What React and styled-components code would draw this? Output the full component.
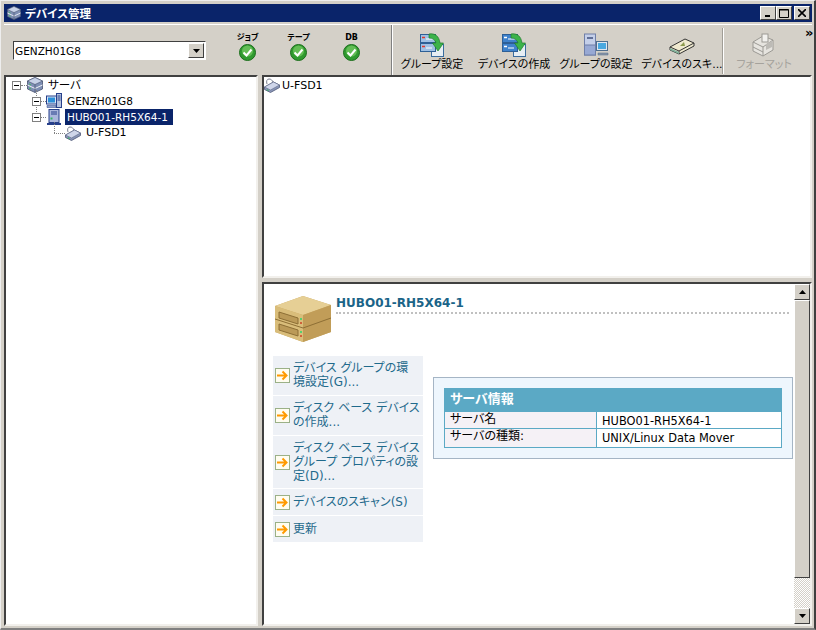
import React from 'react';
import styled, { createGlobalStyle } from 'styled-components';

const GlobalStyle = createGlobalStyle`
  html, body {
    margin: 0;
    padding: 0;
    background: #d4d0c8;
    overflow: hidden;
  }
`;

const FONT = `"DejaVu Sans", "Noto Sans CJK JP", sans-serif`;

const Window = styled.div`
  box-sizing: border-box;
  width: 816px;
  height: 630px;
  display: flex;
  flex-direction: column;
  background: #d4d0c8;
  font-family: ${FONT};
  font-feature-settings: 'palt';
  font-size: 11px;
  color: #000;
  border-right: 2px solid #404040;
  border-bottom: 2px solid #808080;
  border-top: 1px solid #eeeeee;
  border-left: 1px solid #eeeeee;
  padding: 3px 2px 2px 3px;
`;

const TitleBar = styled.div`
  height: 18px;
  flex: none;
  display: flex;
  align-items: center;
  padding: 0 2px 0 3px;
  background: #0a246a;
  color: #fff;
  font-weight: 700;
  font-size: 11.5px;
`;

const TitleText = styled.span`
  margin-left: 4px;
  flex: 1;
`;

const WinButton = styled.div`
  box-sizing: border-box;
  width: 16px;
  height: 14px;
  margin-left: ${(p) => p.$gap || 0}px;
  display: flex;
  align-items: center;
  justify-content: center;
  background: #d4d0c8;
  border-top: 1px solid #fff;
  border-left: 1px solid #fff;
  border-right: 1px solid #404040;
  border-bottom: 1px solid #404040;
`;

const Toolbar = styled.div`
  height: 51px;
  flex: none;
  margin-top: 2px;
  display: flex;
  border-top: 1px solid #fff;
  box-sizing: border-box;
`;

const LeftTools = styled.div`
  width: 388px;
  flex: none;
  box-sizing: border-box;
  display: flex;
  border-right: 1px solid #808080;
  box-shadow: 1px 0 0 #fff;
`;

const Combo = styled.div`
  box-sizing: border-box;
  width: 193px;
  height: 19px;
  margin: 16px 0 0 9px;
  display: flex;
  align-items: center;
  justify-content: space-between;
  background: #fff;
  padding: 0 1px 0 1px;
  font-size: 10.5px;
  border-top: 1px solid #404040;
  border-left: 1px solid #404040;
  border-right: 1px solid #fff;
  border-bottom: 1px solid #fff;
`;

const ComboArrow = styled.div`
  box-sizing: border-box;
  width: 16px;
  height: 15px;
  display: flex;
  align-items: center;
  justify-content: center;
  background: #d4d0c8;
  border-top: 1px solid #fff;
  border-left: 1px solid #fff;
  border-right: 1px solid #404040;
  border-bottom: 1px solid #404040;
`;

const StatusRow = styled.div`
  display: flex;
  margin-left: 16px;
  padding-top: 7px;
`;

const StatusItem = styled.div`
  width: ${(p) => p.$w}px;
  display: flex;
  flex-direction: column;
  align-items: center;
`;

const StatusLabel = styled.div`
  font-size: 8px;
  line-height: 12px;
  font-weight: 700;
  white-space: nowrap;
`;

const ToolButtons = styled.div`
  flex: 1;
  display: flex;
  padding-left: 1px;
`;

const ToolButton = styled.div`
  width: ${(p) => p.$w}px;
  flex: none;
  margin-left: ${(p) => p.$ml || 0}px;
  display: flex;
  flex-direction: column;
  align-items: center;
  padding-top: 8px;
  box-sizing: border-box;
  font-size: 11px;
  color: ${(p) => (p.$disabled ? '#a5a29c' : '#000')};
  white-space: nowrap;
`;

const ToolLabel = styled.span`
  margin-top: 1px;
  line-height: 14px;
`;

const ToolSeparator = styled.div`
  width: 1px;
  height: 46px;
  margin-top: 3px;
  flex: none;
  background: #a09d96;
  box-shadow: 1px 0 0 #fff;
`;

const MoreChevron = styled.div`
  margin-left: auto;
  padding: 1px 10px 0 0;
  font-size: 13px;
  font-weight: 700;
  line-height: 13px;
`;

const Panes = styled.div`
  flex: 1;
  min-height: 0;
  display: flex;
  gap: 4px;
`;

const Sunken = styled.div`
  box-sizing: border-box;
  background: #fff;
  border-top: 2px solid #404040;
  border-left: 2px solid #404040;
  border-right: 2px solid #f2f0ec;
  border-bottom: 2px solid #f2f0ec;
`;

const TreePane = styled(Sunken)`
  width: 254px;
  flex: none;
  padding: 0 0 0 6px;
`;

const RightColumn = styled.div`
  flex: 1;
  display: flex;
  flex-direction: column;
  gap: 4px;
  min-width: 0;
`;

const ListPane = styled(Sunken)`
  height: 203px;
  flex: none;
`;

const DetailPane = styled(Sunken)`
  flex: 1;
  min-height: 0;
  display: flex;
`;

const TreeRow = styled.div`
  position: relative;
  height: 16px;
  display: flex;
  align-items: center;
  padding-left: ${(p) => p.$indent}px;
  white-space: nowrap;
  &::before {
    content: ${(p) => (p.$stem ? "''" : 'none')};
    position: absolute;
    left: ${(p) => p.$stemX}px;
    top: ${(p) => p.$stemTop}px;
    height: ${(p) => p.$stemH}px;
    border-left: 1px dotted #808080;
  }
`;

const Expander = styled.span`
  box-sizing: border-box;
  position: relative;
  width: 9px;
  height: 9px;
  flex: none;
  border: 1px solid #808080;
  background: #fff;
  z-index: 1;
  &::after {
    content: '';
    position: absolute;
    left: 1px;
    top: 3px;
    width: 5px;
    height: 1px;
    background: #000;
  }
`;

const Dots = styled.span`
  width: ${(p) => p.$w}px;
  flex: none;
  border-top: 1px dotted #808080;
`;

const TreeLabel = styled.span`
  margin-left: 3px;
  padding: 0 ${(p) => (p.$selected ? 5 : 2)}px 0 2px;
  line-height: 16px;
  font-size: ${(p) => p.$size}px;
  background: ${(p) => (p.$selected ? '#0a246a' : 'transparent')};
  color: ${(p) => (p.$selected ? '#fff' : '#000')};
`;

const ListRow = styled.div`
  display: flex;
  align-items: center;
  height: 16px;
  gap: 2px;
`;

const DetailBody = styled.div`
  flex: 1;
  min-width: 0;
  padding: 12px 0 0 9px;
`;

const DetailHeader = styled.div`
  display: flex;
  align-items: flex-start;
  height: 60px;
  padding-left: 2px;
  margin-right: 5px;
`;

const DetailTitleWrap = styled.div`
  flex: 1;
  margin: 0 0 0 5px;
  height: 16px;
  border-bottom: 2px dotted #c0c0c0;
`;

const DetailTitle = styled.div`
  font-size: 12px;
  line-height: 15px;
  font-weight: 700;
  color: #1a6488;
`;

const DetailColumns = styled.div`
  display: flex;
  align-items: flex-start;
`;

const ActionList = styled.div`
  width: 150px;
  flex: none;
  display: flex;
  flex-direction: column;
  gap: 1px;
`;

const ActionItem = styled.div`
  box-sizing: border-box;
  height: ${(p) => p.$h}px;
  display: flex;
  align-items: center;
  gap: 3px;
  padding-left: 2px;
  background: #eef1f6;
  color: #1f6a8c;
  font-size: 12px;
  line-height: 14px;
  white-space: pre-line;
`;

const ActionText = styled.span`
  margin-top: -1px;
`;

const InfoBox = styled.div`
  box-sizing: border-box;
  width: 360px;
  height: 82px;
  flex: none;
  margin: 21px 0 0 10px;
  padding: 10px;
  background: #eef6fd;
  border: 1px solid #a5b5c5;
`;

const InfoTable = styled.div`
  box-sizing: border-box;
  border: 1px solid #5ba9c5;
  border-top: none;
  display: grid;
  grid-template-columns: 152px 1fr;
  font-size: 12px;
`;

const InfoHead = styled.div`
  grid-column: 1 / -1;
  height: 24px;
  margin: 0 -1px;
  padding: 3px 0 0 6px;
  box-sizing: border-box;
  background: #5ba9c5;
  color: #fff;
  font-size: 13px;
  line-height: 16px;
  font-weight: 700;
`;

const InfoKey = styled.div`
  height: ${(p) => p.$h}px;
  box-sizing: border-box;
  padding-left: 5px;
  line-height: 14px;
  background: #f5f1f6;
  border-right: 1px solid #5ba9c5;
  border-bottom: ${(p) => (p.$last ? 'none' : '1px solid #5ba9c5')};
`;

const InfoValue = styled.div`
  height: ${(p) => p.$h}px;
  box-sizing: border-box;
  padding: 2px 0 0 5px;
  font-size: 11.4px;
  line-height: 15px;
  background: #fff;
  border-bottom: ${(p) => (p.$last ? 'none' : '1px solid #5ba9c5')};
`;

const Scrollbar = styled.div`
  width: 16px;
  flex: none;
  display: flex;
  flex-direction: column;
  background-color: #eeece8;
  background-image: repeating-conic-gradient(#d4d0c8 0 25%, #fff 0 50%);
  background-size: 2px 2px;
`;

const ScrollPart = styled.div`
  box-sizing: border-box;
  flex: none;
  height: ${(p) => p.$h}px;
  display: flex;
  align-items: center;
  justify-content: center;
  background: #d4d0c8;
  border-top: 1px solid #fff;
  border-left: 1px solid #fff;
  border-right: 1px solid #404040;
  border-bottom: 1px solid #404040;
`;

const ScrollGap = styled.div`
  flex: 1;
`;

const Caret = ({ up }) => (
  <svg width="7" height="4" viewBox="0 0 7 4">
    <path d={up ? 'M3.5 0L7 4H0z' : 'M0 0h7L3.5 4z'} fill="#000" />
  </svg>
);

const CheckIcon = () => (
  <svg width="17" height="17" viewBox="0 0 17 17">
    <circle cx="8.5" cy="8.5" r="8" fill="#2f9a2f" stroke="#1c6e1c" />
    <circle cx="8.5" cy="7" r="5.5" fill="#7fd06a" opacity="0.65" />
    <path d="M4.5 8.5l3 3 5-6" fill="none" stroke="#fff" strokeWidth="2" />
  </svg>
);

const ServerStackIcon = ({ size = 16 }) => (
  <svg width={size} height={size} viewBox="0 0 16 16" style={{ flex: 'none' }}>
    <path d="M8 .5l7.5 3.5v8L8 15.5.5 12V4z" fill="#7f8fb4" stroke="#47526e" strokeWidth="0.8" />
    <path d="M.5 4L8 7.5 15.5 4 8 .5z" fill="#c8d2e8" stroke="#47526e" strokeWidth="0.6" />
    <path d="M.5 8L8 11.5 15.5 8" fill="none" stroke="#eef0f6" strokeWidth="1" />
    <path d="M8 7.5v8" stroke="#47526e" strokeWidth="0.7" />
    <path d="M2 7l2 .9M2 11l2 .9" stroke="#3fbf5f" strokeWidth="1" />
  </svg>
);

const ComputerIcon = () => (
  <svg width="16" height="16" viewBox="0 0 16 16" style={{ flex: 'none' }}>
    <rect x="10.5" y="0.5" width="5" height="14" fill="#b6c2de" stroke="#27408b" />
    <path d="M11.5 3h3M11.5 5h3M11.5 7h3" stroke="#27408b" />
    <rect x="0.5" y="3" width="10" height="8" fill="#d9e3f4" stroke="#27408b" />
    <rect x="2" y="4.5" width="7" height="5" fill="#2b8fd8" />
    <path d="M1 12.5h9v2H1z" fill="#8ea0c8" stroke="#27408b" strokeWidth="0.5" />
  </svg>
);

const TowerIcon = () => (
  <svg width="16" height="16" viewBox="0 0 16 16" style={{ flex: 'none' }}>
    <rect x="3" y="0.5" width="10" height="13" fill="#aab7dc" stroke="#27408b" />
    <path d="M5 3h6M5 5h6" stroke="#27408b" />
    <rect x="4.5" y="8.5" width="2" height="2" fill="#32b860" />
    <path d="M1 15h14" stroke="#27408b" strokeWidth="2" />
  </svg>
);

const DiskIcon = () => (
  <svg width="16" height="15" viewBox="0 0 16 15" style={{ flex: 'none' }}>
    <path d="M3 6C2 3 3 1 5 1s3 1 4 3" fill="none" stroke="#7a7f8e" strokeWidth="1" />
    <path d="M.5 9L9.5 4l6 3v2.5L6.5 14.5l-6-3z" fill="#8a96b8" stroke="#4e5876" strokeWidth="0.8" />
    <path d="M.5 9l6 3 9-5-6-3z" fill="#cfd6ea" stroke="#5e6886" strokeWidth="0.6" />
    <path d="M3 11.8l1.5.7" stroke="#32b860" strokeWidth="1.2" />
  </svg>
);

const GroupArrowIcon = ({ dark }) => (
  <svg width="24" height="24" viewBox="0 0 24 24">
    <rect x="11.5" y="11.5" width="12" height="12" fill="#e7eef4" stroke="#3a6c9e" />
    <rect x="0.5" y="1.5" width="15" height="8" fill={dark ? '#3f82cc' : '#9fc0e4'} stroke="#2d5f96" />
    <rect x="0.5" y="10.5" width="15" height="8" fill={dark ? '#3f82cc' : '#9fc0e4'} stroke="#2d5f96" />
    <path d="M2 4.5h3M2 13.5h3" stroke={dark ? '#fff' : '#e0382c'} strokeWidth="1.5" />
    <path d="M6 6h8M6 15h6" stroke="#fff" />
    <path d="M9 1c6-1 10 2 11 9h3.5L18 18l-5.5-8H16c-1-3-3-5-7-5z" fill="#3cb34a" stroke="#1f7a2c" strokeWidth="0.7" />
  </svg>
);

const GroupSettingIcon = () => (
  <svg width="25" height="24" viewBox="0 0 25 24">
    <rect x="0.5" y="1" width="11" height="21" fill="#c4cfe9" stroke="#6f7fa8" />
    <rect x="0.5" y="12" width="11" height="10" fill="#98a9d4" stroke="#6f7fa8" />
    <path d="M3 5h6" stroke="#40507c" strokeWidth="1.5" />
    <rect x="12.5" y="8.5" width="11" height="9" fill="#dfe6f0" stroke="#4f6f8f" />
    <rect x="14" y="10" width="8" height="6" fill="#48a8e0" />
    <path d="M14 20h10v2H14z" fill="#8a97a8" stroke="#4f6f8f" strokeWidth="0.5" />
  </svg>
);

const ScanIcon = () => (
  <svg width="26" height="24" viewBox="0 0 26 24">
    <path d="M1 14l15-8 9 4v3l-15 8-9-4z" fill="#efe9cf" stroke="#333" strokeWidth="1" />
    <path d="M1 14l9 4 15-8M10 18v3" fill="none" stroke="#333" strokeWidth="1" />
    <path d="M1 15l9 4v2l-9-4z" fill="#7fb09a" />
    <path d="M11 13l4-4 1 4z" fill="#8c9a4e" />
  </svg>
);

const FormatIcon = () => (
  <svg width="24" height="24" viewBox="0 0 24 24">
    <path d="M1 9l10-6 10 4v10l-10 6-10-5z" fill="#e6e4df" stroke="#9b9994" />
    <path d="M1 9l10 5 10-7M11 14v9M1 14l10 5" fill="none" stroke="#9b9994" />
    <rect x="10" y="1" width="6" height="8" fill="#f2f1ee" stroke="#9b9994" />
    <path d="M14 11l6-3v6l-6 3z" fill="#bdbbb6" />
  </svg>
);

const StorageIcon = () => (
  <svg width="56" height="46" viewBox="0 0 56 46" style={{ flex: 'none' }}>
    <path d="M28 0L56 9v27L28 46 0 36V10z" fill="#c9a965" />
    <path d="M0 10L28 0l28 9-28 10z" fill="#e6cf95" />
    <path d="M28 19l28-10v27L28 46z" fill="#c19d58" />
    <path d="M0 10l28 9v27L0 36z" fill="#d9bd7a" />
    <path d="M0 23l28 9 28-10" fill="none" stroke="#8d6f35" strokeWidth="1" />
    <path d="M4 16l19 6v6L4 22zM4 28l19 6v6L4 34z" fill="#bb9a58" stroke="#8d6f35" strokeWidth="1" />
    <rect x="25" y="22" width="2" height="2" fill="#55d070" />
    <rect x="25" y="26" width="2" height="2" fill="#d0603a" />
    <rect x="25" y="35" width="2" height="2" fill="#55d070" />
    <rect x="25" y="39" width="2" height="2" fill="#d0603a" />
  </svg>
);

const ActionArrow = () => (
  <svg width="15" height="15" viewBox="0 0 15 15" style={{ flex: 'none' }}>
    <rect x="0.5" y="0.5" width="14" height="14" fill="#fffdf0" stroke="#3f6b1a" strokeDasharray="1 1" />
    <path d="M2 7.5h9M7.5 3.5L11.5 7.5 7.5 11.5" fill="none" stroke="#ff9a00" strokeWidth="2" />
  </svg>
);

const actions = [
  { text: 'デバイス グループの環\n境設定(G)...', h: 39 },
  { text: 'ディスク ベース デバイス\nの作成...', h: 39 },
  { text: 'ディスク ベース デバイス\nグループ プロパティの設\n定(D)...', h: 52 },
  { text: 'デバイスのスキャン(S)', h: 26 },
  { text: '更新', h: 26 },
];

const App = () => {
  return (
    <>
      <GlobalStyle />
      <Window>
        <TitleBar>
          <ServerStackIcon size={14} />
          <TitleText>デバイス管理</TitleText>
          <WinButton>
            <svg width="8" height="8" viewBox="0 0 8 8"><path d="M1 6h5v2H1z" fill="#000" /></svg>
          </WinButton>
          <WinButton>
            <svg width="10" height="10" viewBox="0 0 10 10"><path d="M.5 1.5h9v8h-9zM.5 1v1h9" fill="none" stroke="#000" /></svg>
          </WinButton>
          <WinButton $gap={2}>
            <svg width="8" height="8" viewBox="0 0 8 8"><path d="M0 0l8 8M8 0L0 8" stroke="#000" strokeWidth="1.6" /></svg>
          </WinButton>
        </TitleBar>

        <Toolbar>
          <LeftTools>
            <Combo>
              GENZH01G8
              <ComboArrow><Caret /></ComboArrow>
            </Combo>
            <StatusRow>
              <StatusItem $w={51}><StatusLabel>ジョブ</StatusLabel><CheckIcon /></StatusItem>
              <StatusItem $w={51}><StatusLabel>テープ</StatusLabel><CheckIcon /></StatusItem>
              <StatusItem $w={55}><StatusLabel>DB</StatusLabel><CheckIcon /></StatusItem>
            </StatusRow>
          </LeftTools>
          <ToolButtons>
            <ToolButton $w={78}><GroupArrowIcon /><ToolLabel>グループ設定</ToolLabel></ToolButton>
            <ToolButton $w={86}><GroupArrowIcon dark /><ToolLabel>デバイスの作成</ToolLabel></ToolButton>
            <ToolButton $w={78}><GroupSettingIcon /><ToolLabel>グループの設定</ToolLabel></ToolButton>
            <ToolButton $w={80} $ml={7}><ScanIcon /><ToolLabel>デバイスのスキ...</ToolLabel></ToolButton>
            <ToolSeparator />
            <ToolButton $w={82} $disabled><FormatIcon /><ToolLabel>フォーマット</ToolLabel></ToolButton>
            <MoreChevron>»</MoreChevron>
          </ToolButtons>
        </Toolbar>

        <Panes>
          <TreePane>
            <TreeRow $indent={0} $stem $stemX={24} $stemTop={13} $stemH={22}>
              <Expander />
              <Dots $w={6} />
              <ServerStackIcon />
              <TreeLabel $size={11.5}>サーバ</TreeLabel>
            </TreeRow>
            <TreeRow $indent={20}>
              <Expander />
              <Dots $w={5} />
              <ComputerIcon />
              <TreeLabel $size={10.5}>GENZH01G8</TreeLabel>
            </TreeRow>
            <TreeRow $indent={20} $stem $stemX={42} $stemTop={13} $stemH={11}>
              <Expander />
              <Dots $w={5} />
              <TowerIcon />
              <TreeLabel $size={10.5} $selected>HUBO01-RH5X64-1</TreeLabel>
            </TreeRow>
            <TreeRow $indent={42}>
              <Dots $w={11} />
              <DiskIcon />
              <TreeLabel $size={11}>U-FSD1</TreeLabel>
            </TreeRow>
          </TreePane>

          <RightColumn>
            <ListPane>
              <ListRow>
                <DiskIcon />
                U-FSD1
              </ListRow>
            </ListPane>

            <DetailPane>
              <DetailBody>
                <DetailHeader>
                  <StorageIcon />
                  <DetailTitleWrap>
                    <DetailTitle>HUBO01-RH5X64-1</DetailTitle>
                  </DetailTitleWrap>
                </DetailHeader>
                <DetailColumns>
                  <ActionList>
                    {actions.map((a) => (
                      <ActionItem key={a.text} $h={a.h}>
                        <ActionArrow />
                        <ActionText>{a.text}</ActionText>
                      </ActionItem>
                    ))}
                  </ActionList>
                  <InfoBox>
                    <InfoTable>
                      <InfoHead>サーバ情報</InfoHead>
                      <InfoKey $h={17}>サーバ名</InfoKey>
                      <InfoValue $h={17}>HUBO01-RH5X64-1</InfoValue>
                      <InfoKey $h={18} $last>サーバの種類:</InfoKey>
                      <InfoValue $h={18} $last>UNIX/Linux Data Mover</InfoValue>
                    </InfoTable>
                  </InfoBox>
                </DetailColumns>
              </DetailBody>
              <Scrollbar>
                <ScrollPart $h={16}><Caret up /></ScrollPart>
                <ScrollPart $h={278} />
                <ScrollGap />
                <ScrollPart $h={16}><Caret /></ScrollPart>
              </Scrollbar>
            </DetailPane>
          </RightColumn>
        </Panes>
      </Window>
    </>
  );
};

export default App;
